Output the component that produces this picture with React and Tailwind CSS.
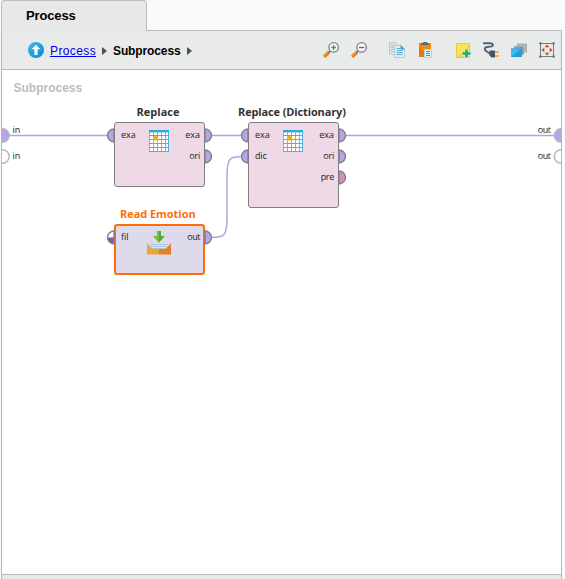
const ui = "font-['Liberation_Sans',Arial,sans-serif]";
const op = "font-['Open_Sans',sans-serif]";

function UpIcon() {
  return (
    <svg width="16" height="16" viewBox="0 0 16 16" className="shrink-0">
      <defs>
        <linearGradient id="up" x1="0" y1="0" x2="1" y2="1">
          <stop offset="0" stopColor="#41b8e8" />
          <stop offset="1" stopColor="#078ad0" />
        </linearGradient>
      </defs>
      <circle cx="8" cy="8" r="8" fill="url(#up)" />
      <path d="M8 2.8L12.5 7.3H9.6V13H6.4V7.3H3.5Z" fill="#fff" />
    </svg>
  );
}

function Arrow() {
  return (
    <svg width="5" height="8" viewBox="0 0 5 8" className="shrink-0">
      <path d="M0 0L5 4L0 8Z" fill="#505050" />
    </svg>
  );
}

function ZoomIcon({ plus }) {
  return (
    <svg width="16" height="16" viewBox="0 0 16 16" className="shrink-0">
      <path d="M1.2 14.8L6 10" stroke="#d9791a" strokeWidth="3.2" />
      <path d="M0.7 14.2L5.5 9.4" stroke="#f39a1f" strokeWidth="1.6" />
      <path d="M5.6 10.4L7 9" stroke="#66788a" strokeWidth="1.6" />
      <circle cx="10.6" cy="5.4" r="4.7" fill="#f5f7f8" stroke="#71859a" strokeWidth="1.3" />
      {plus ? (
        <path d="M8.2 5.5H13M10.6 3.1V7.9" stroke="#4f9e2b" strokeWidth="1.3" />
      ) : (
        <path d="M8 5.5H13.2" stroke="#e33b24" strokeWidth="1.4" />
      )}
    </svg>
  );
}

function CopyIcon() {
  return (
    <svg width="17" height="16" viewBox="0 0 17 16" className="shrink-0">
      <path d="M0.5 0.5H6L9.5 4V12.5H0.5Z" fill="#e1e4e6" stroke="#c0c5c8" />
      <path d="M2 3.5H5M2 5.5H5M2 7.5H5M2 9.5H5" stroke="#b8bdc0" />
      <path d="M5.5 3.5H12L15.5 7V15.5H5.5Z" fill="#d8eefa" stroke="#a1d2ec" />
      <path d="M11.5 3L16 7.5H11.5Z" fill="#2e9fd2" />
      <path d="M7.5 6.5H11M7.5 8.5H13.5M7.5 10.5H13.5M7.5 12.5H13.5" stroke="#6ba3c2" />
    </svg>
  );
}

function PasteIcon() {
  return (
    <svg width="13" height="16" viewBox="0 0 13 16" className="shrink-0">
      <path d="M0 1H12V15H0Z" fill="#f58a0a" />
      <path d="M0 15V5L10 15Z" fill="#e8750b" />
      <path d="M2 1H4V0H8V1H10V3H2Z" fill="#5b6b78" />
      <path d="M5.5 7.5H12.5V15.5H5.5Z" fill="#e4f4fc" stroke="#a8d7ef" />
      <path d="M7 9.5H11M7 11.5H11M7 13.5H11" stroke="#4c8bae" />
    </svg>
  );
}

function NoteIcon() {
  return (
    <svg width="15" height="16" viewBox="0 0 15 16" className="shrink-0">
      <path d="M0.5 1.5H13.5V15.5H0.5Z" fill="#f9e558" stroke="#e1c94a" />
      <path d="M1 15L13 3V15Z" fill="#f1d743" />
      <path d="M10.5 7V16M6 11.5H15" stroke="#e8ebea" strokeWidth="4" />
      <path d="M10.5 7.5V15.5M6.5 11.5H14.5" stroke="#1cae61" strokeWidth="2.5" />
    </svg>
  );
}

function PlugIcon() {
  return (
    <svg width="16" height="16" viewBox="0 0 16 16" className="shrink-0">
      <path d="M0 1.2H7.5C10.8 1.2 10.6 4.4 7.5 4.6L4.5 5C1 5.4 1.2 8 3.4 9.2L7 11.7" fill="none" stroke="#566572" strokeWidth="1.9" />
      <path d="M6.5 8.5H12V15.5H8.5L6.5 13.8Z" fill="#435463" />
      <path d="M12 10H16M12 14H16" stroke="#eea52f" strokeWidth="1.6" />
    </svg>
  );
}

function LayersIcon() {
  return (
    <svg width="16" height="16" viewBox="0 0 16 16" className="shrink-0">
      <path d="M6 1.5H16V10.5H6Z" fill="#a7b0b5" />
      <path d="M3 4H13V13H3Z" fill="#8497a2" stroke="#d1d7da" strokeWidth=".6" />
      <path d="M0 6.5H11V15H0Z" fill="#1b9fdf" />
      <path d="M0 15L10.5 6.5H0Z" fill="#42b5eb" />
    </svg>
  );
}

function FitIcon() {
  return (
    <svg width="16" height="16" viewBox="0 0 16 16" className="shrink-0">
      <path d="M1.5 0V16M14.5 0V16M0 1.5H16M0 14.5H16" stroke="#6d7f8c" />
      <path d="M0.5 0.5H2.5V2.5H0.5ZM13.5 0.5H15.5V2.5H13.5ZM0.5 13.5H2.5V15.5H0.5ZM13.5 13.5H15.5V15.5H13.5Z" fill="#667783" />
      <path d="M8 2.5L10.3 5.3H5.7ZM8 13.5L5.7 10.7H10.3ZM2.5 8L5.3 5.7V10.3ZM13.5 8L10.7 10.3V5.7Z" fill="#d34320" />
    </svg>
  );
}

function TableIcon() {
  return (
    <svg width="20" height="22" viewBox="0 0 20 22" className="absolute left-[34px] top-[7px]">
      <path d="M0 0H20V22H0Z" fill="#fff" />
      <path d="M0 1.2H20" stroke="#2aa8e0" strokeWidth="2.4" />
      <path d="M.5 2V22M4.5 2V22M8.5 2V22M12.5 2V22M16.5 2V22" stroke="#62c3ee" />
      <path d="M0 5.5H20M0 9.5H20M0 13.5H20M0 17.5H20M0 21.5H20M19.5 2V22" stroke="#45b5e8" />
      <rect x="4" y="6" width="4.5" height="4.5" rx=".8" fill="#f9ad12" />
    </svg>
  );
}

function InboxIcon() {
  return (
    <svg width="24" height="24" viewBox="0 0 24 24" className="absolute left-[31px] top-[5px]">
      <path d="M3 13H21L19 19H5Z" fill="#a9c7d8" />
      <path d="M4 14.5H20M5 16.5H19" stroke="#dceaf1" />
      <path d="M0 12L5 18H12V23.5H0Z" fill="#efa631" />
      <path d="M24 12L19 18H12V23.5H24Z" fill="#e87f22" />
      <path d="M10 0H14V5H18L12 11.5L6 5H10Z" fill="#55a630" />
      <path d="M10 0H12V11.5L6 5H10Z" fill="#74bd43" />
    </svg>
  );
}

function Label({ className, children }) {
  return (
    <span className={`absolute whitespace-nowrap text-[9px] leading-[12px] text-[#222] ${className}`}>{children}</span>
  );
}

function LeftPort({ x, y, fill, lower }) {
  const shape = `M${x} ${y - 6.5}A6.5 6.5 0 0 0 ${x} ${y + 6.5}Z`;
  return (
    <g>
      <path d={shape} fill={fill} />
      {lower && <path d={`M${x - 6.5} ${y}H${x}V${y + 6.5}A6.5 6.5 0 0 1 ${x - 6.5} ${y}Z`} fill={lower} />}
      <path d={shape} fill="none" stroke="#808080" strokeWidth="1.4" />
    </g>
  );
}

function RightPort({ x, y, fill }) {
  return <path d={`M${x} ${y - 6.5}A6.5 6.5 0 0 1 ${x} ${y + 6.5}Z`} fill={fill} stroke="#808080" strokeWidth="1.4" />;
}

function Canvas() {
  return (
    <div className={`relative h-[504px] overflow-hidden bg-white ${op}`}>
      <div className={`absolute left-[11.5px] top-[10px] text-[12px] font-bold leading-[16px] text-[#bdbdbd] ${ui}`}>
        Subprocess
      </div>

      <svg width="559" height="504" viewBox="2 70 559 504" className="absolute left-0 top-0">
        <g fill="none" stroke="#b1a3e3" strokeWidth="1.5">
          <path d="M8 135.5H108M211 135.5H242M345 135.5H555" />
          <path d="M211 237.5C224 237.5 227 236 227 218V176C227 158 230 156.5 242 156.5" />
        </g>
        <g stroke="#b8b8b8" strokeWidth="1.5">
          <circle cx="2.5" cy="135.5" r="6.7" fill="#b5a5e9" />
          <circle cx="2.5" cy="156.5" r="6.7" fill="#fff" />
          <circle cx="561" cy="135.5" r="6.7" fill="#b5a5e9" />
          <circle cx="561" cy="156.5" r="6.7" fill="#fff" />
        </g>
      </svg>

      <div className="absolute left-[112px] top-[52px] h-[65px] w-[91px] rounded-[3px] border border-[#808080] bg-[#f0d9e7]">
        <TableIcon />
        <Label className="left-[6px] top-[6px]">exa</Label>
        <Label className="right-[4px] top-[6px]">exa</Label>
        <Label className="right-[4px] top-[27px] tracking-[-0.2px]">ori</Label>
      </div>
      <div className="absolute left-[246px] top-[52px] h-[86px] w-[91px] rounded-[3px] border border-[#808080] bg-[#f0d9e7]">
        <TableIcon />
        <Label className="left-[6px] top-[6px]">exa</Label>
        <Label className="left-[6px] top-[27px] tracking-[-0.2px]">dic</Label>
        <Label className="right-[4px] top-[6px]">exa</Label>
        <Label className="right-[4px] top-[27px] tracking-[-0.2px]">ori</Label>
        <Label className="right-[4px] top-[48px] tracking-[-0.3px]">pre</Label>
      </div>
      <div className="absolute left-[112px] top-[154px] h-[51px] w-[91px] rounded-[3px] border-2 border-[#ff6d08] bg-[#dedaeb]">
        <InboxIcon />
        <Label className="left-[5px] top-[5px]">fil</Label>
        <Label className="right-[3px] top-[5px] tracking-[-0.5px]">out</Label>
      </div>

      <svg width="559" height="504" viewBox="2 70 559 504" className="absolute left-0 top-0">
        <LeftPort x={114} y={135.5} fill="#b5a5e9" />
        <RightPort x={205} y={135.5} fill="#b5a5e9" />
        <RightPort x={205} y={156.5} fill="#b5a5e9" />
        <LeftPort x={248} y={135.5} fill="#b5a5e9" />
        <LeftPort x={248} y={156.5} fill="#b5a5e9" />
        <RightPort x={339} y={135.5} fill="#b5a5e9" />
        <RightPort x={339} y={156.5} fill="#b5a5e9" />
        <RightPort x={339} y={177.5} fill="#d693bd" />
        <LeftPort x={114} y={237.5} fill="#fff" lower="#9747bd" />
        <RightPort x={205} y={237.5} fill="#b5a5e9" />
      </svg>

      <div className="absolute left-[112px] top-[34px] w-[88px] text-center text-[11px] font-bold leading-[16px] text-[#333]">Replace</div>
      <div className="absolute left-[236px] top-[34px] whitespace-nowrap text-[11px] font-bold leading-[16px] tracking-[-0.13px] text-[#333]">
        Replace (Dictionary)
      </div>
      <div className="absolute left-[118px] top-[136px] whitespace-nowrap text-[11px] font-bold leading-[16px] tracking-[-0.05px] text-[#ff6d08]">
        Read Emotion
      </div>

      <Label className="left-[10.5px] top-[54px]">in</Label>
      <Label className="left-[10.5px] top-[80px]">in</Label>
      <Label className="right-[10.5px] top-[54px] tracking-[-0.5px]">out</Label>
      <Label className="right-[10.5px] top-[80px] tracking-[-0.5px]">out</Label>
    </div>
  );
}

export default function App() {
  return (
    <div className={`flex h-[579px] w-[565px] flex-col overflow-hidden bg-[#fafafa] pl-px ${ui}`}>
      <div className="flex h-[31px] shrink-0">
        <div className="z-10 h-[31px] w-[146px] rounded-t-[4px] border border-b-0 border-[#bbb] bg-[#e8e8e8] pl-[24px] pt-[7px] text-[13px] font-bold leading-[16px] tracking-[-0.15px] text-black">
          Process
        </div>
        <div className="h-[31px] w-[415px] border-b border-[#bbb]" />
      </div>
      <div className="flex h-[548px] w-[561px] flex-col border-x border-[#b8b8b8] bg-[#e8ebea]">
        <div className="flex h-[39px] shrink-0 items-center border-b border-[#b8b8b8] pl-[26px] pr-[6px] text-[12px] text-black">
          <UpIcon />
          <span className="ml-[6px] mt-0.5 w-[46px] tracking-[0.38px] text-[#0000ee] underline">Process</span>
          <span className="ml-[6px] mt-0.5 flex"><Arrow /></span>
          <span className="ml-[6px] mt-0.5 w-[68px] font-bold tracking-[-0.12px]">Subprocess</span>
          <span className="ml-[6px] mt-0.5 flex"><Arrow /></span>
          <div className="ml-auto flex items-center">
            <ZoomIcon plus />
            <span className="ml-3 flex"><ZoomIcon /></span>
            <span className="ml-[22px] flex"><CopyIcon /></span>
            <span className="ml-[13px] flex"><PasteIcon /></span>
            <span className="ml-[24px] flex"><NoteIcon /></span>
            <span className="ml-3 flex"><PlugIcon /></span>
            <span className="ml-3 flex"><LayersIcon /></span>
            <span className="ml-3 flex"><FitIcon /></span>
          </div>
        </div>
        <Canvas />
        <div className="h-[5px] border-t border-[#b8b8b8] bg-[#e8e8e8]" />
      </div>
    </div>
  );
}
